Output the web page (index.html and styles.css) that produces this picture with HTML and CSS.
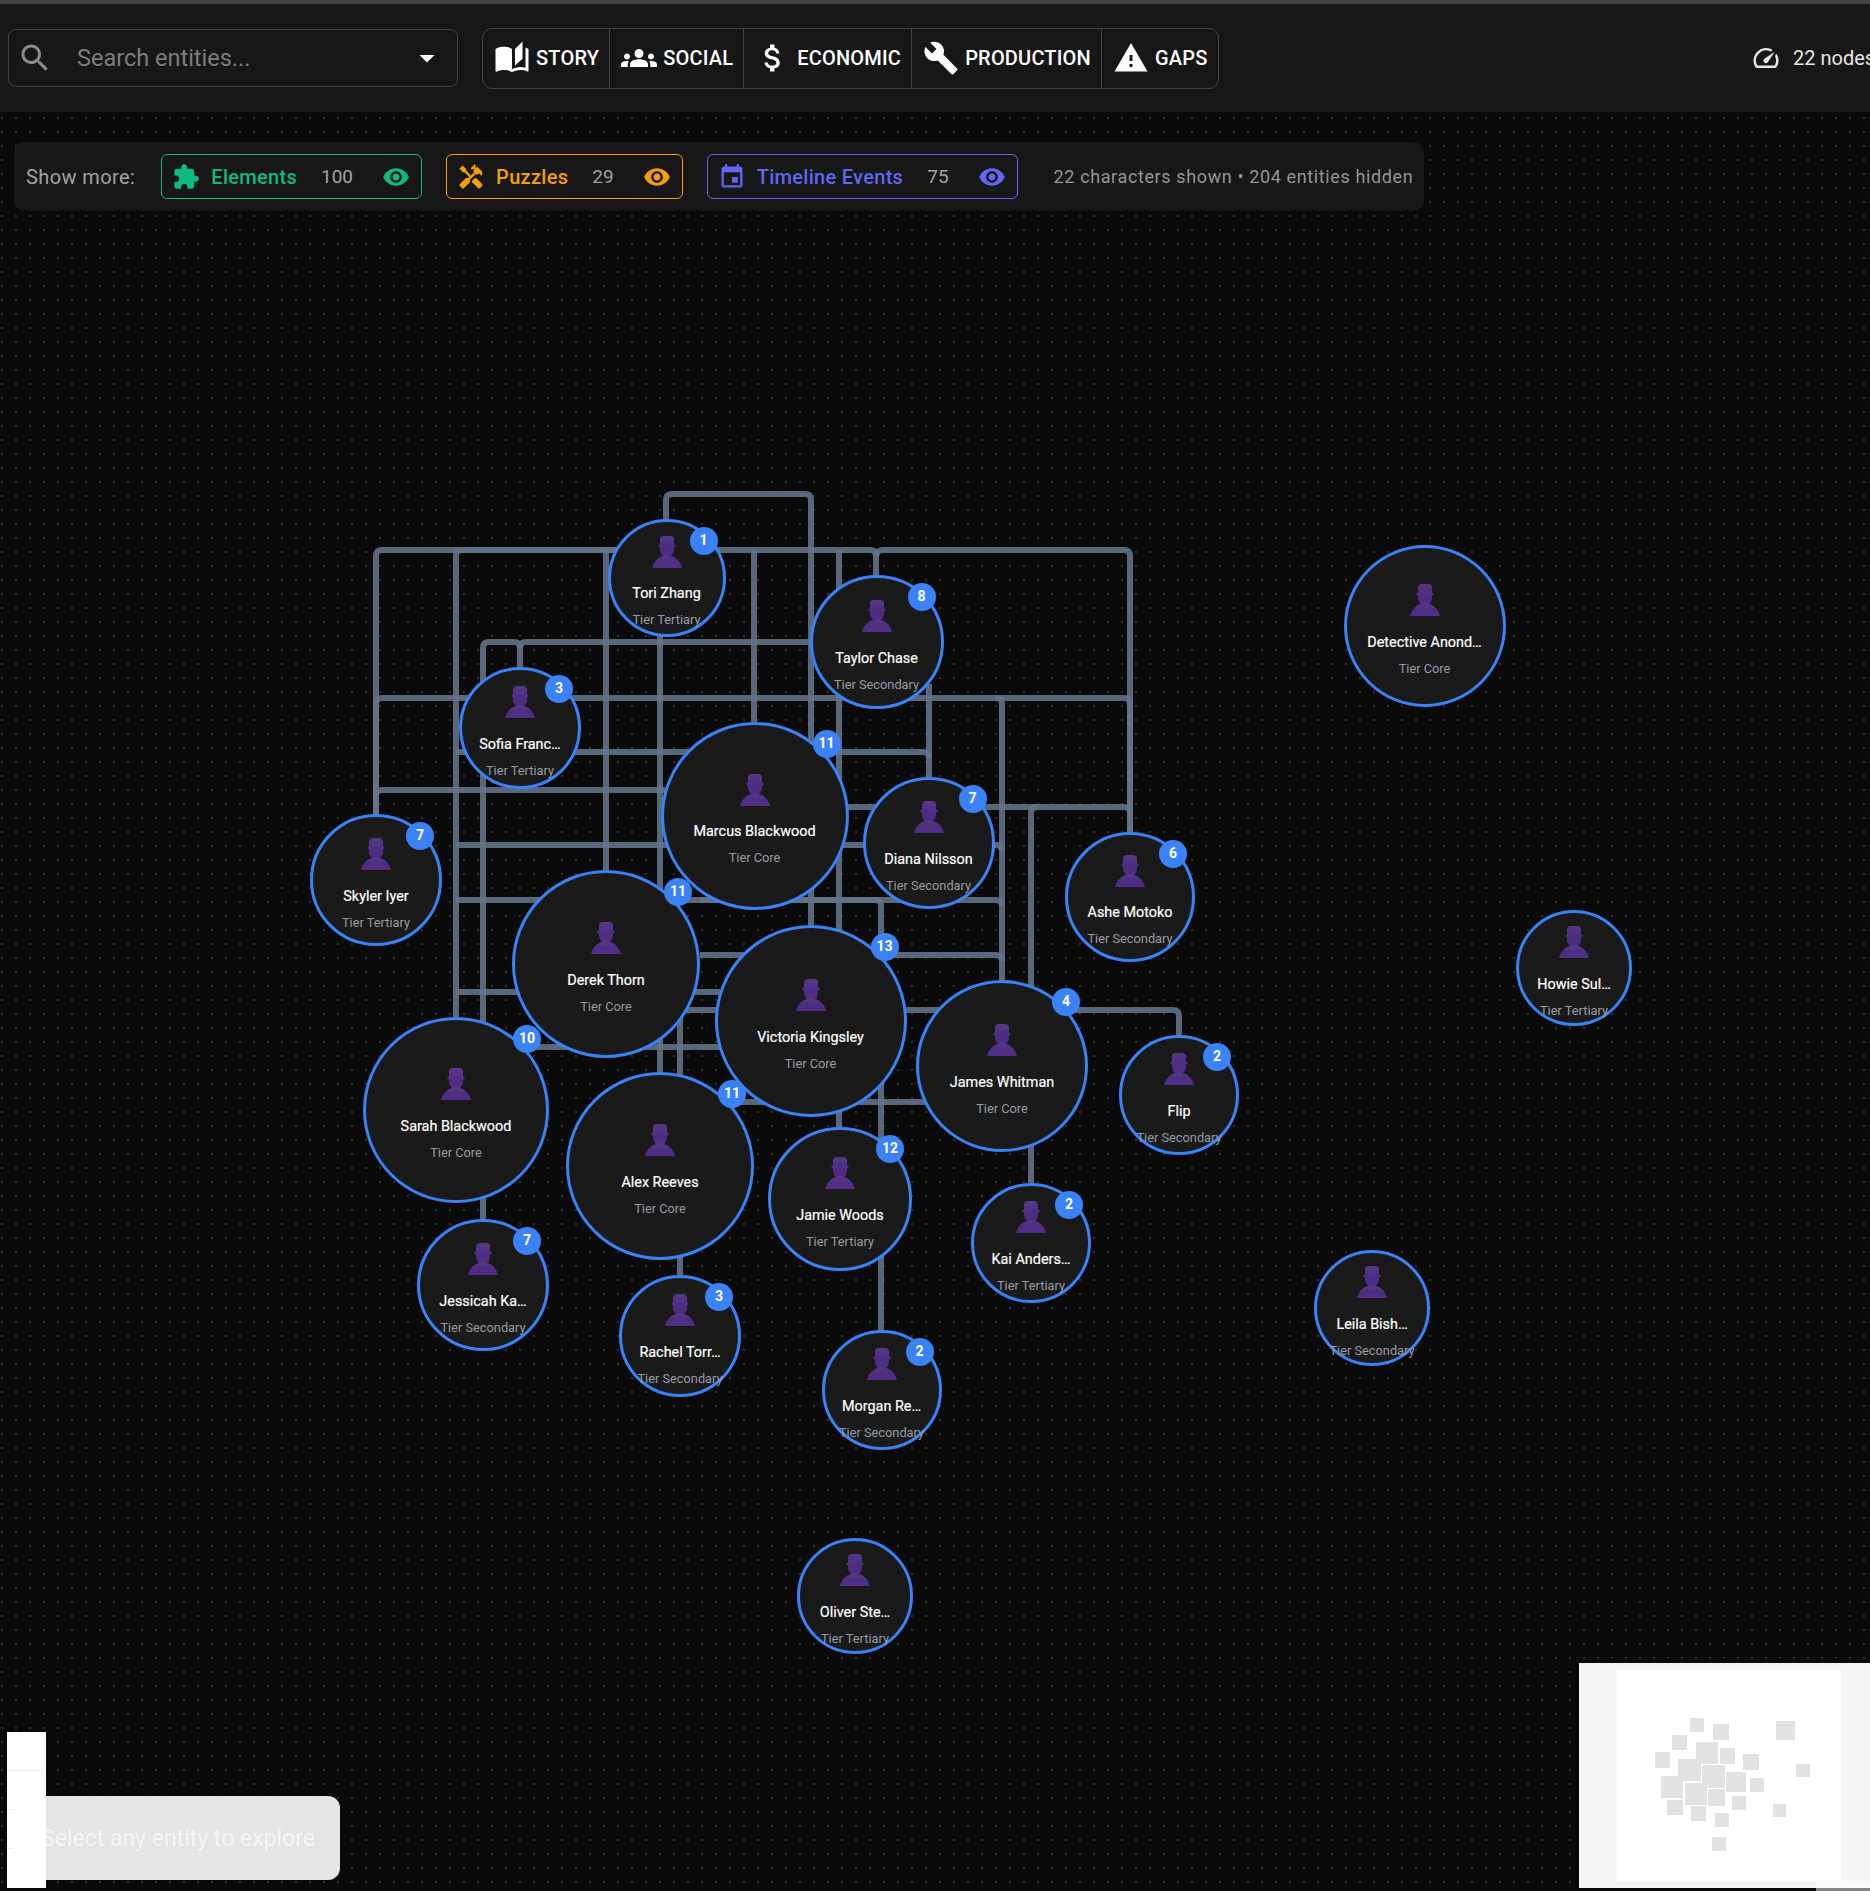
FILE: index.html
```html
<!DOCTYPE html>
<html>

<head>
	<title>entity graph</title>
	<link rel="stylesheet" href="styles.css">
</head>

<body>
	<svg class="sprite" aria-hidden="true">
		<defs>
			<linearGradient id="person-fill" x1="0" y1="0" x2="0" y2="1">
				<stop offset="0" stop-color="#573a85" />
				<stop offset="0.5" stop-color="#4e2d82" />
				<stop offset="1" stop-color="#512d8a" />
			</linearGradient>
		</defs>
		<symbol id="i-person" viewBox="0 0 30 32">
			<g fill="url(#person-fill)">
				<path d="M8 3.500Q8 0 12 0H18Q22 0 22 3.500V13Q22 20 15 21.500Q8 20 8 13Z" />
				<circle cx="7.800" cy="10" r="1.500" />
				<circle cx="22.200" cy="10" r="1.500" />
				<path d="M0 32C1.500 25 7 19.500 15 19.500S28.500 25 30 32Z" />
			</g>
		</symbol>
		<symbol id="i-eye" viewBox="0 0 24 24">
			<path d="M12 4.500C7 4.500 2.730 7.610 1 12c1.730 4.390 6 7.500 11 7.500s9.270-3.110 11-7.500c-1.730-4.390-6-7.500-11-7.500zM12 17c-2.760 0-5-2.240-5-5s2.240-5 5-5 5 2.240 5 5-2.240 5-5 5zm0-8c-1.660 0-3 1.340-3 3s1.340 3 3 3 3-1.340 3-3-1.340-3-3-3z" />
		</symbol>
	</svg>

	<div class="strip"></div>

	<header class="topbar">
		<div class="search">
			<svg class="search-icon" viewBox="0 0 24 24"><path d="M15.500 14h-.79l-.28-.27C15.410 12.590 16 11.110 16 9.500 16 5.910 13.090 3 9.500 3S3 5.910 3 9.500 5.910 16 9.500 16c1.610 0 3.090-.59 4.230-1.570l.27.28v.79l5 4.990L20.490 19l-4.990-5zm-6 0C7.010 14 5 11.990 5 9.500S7.010 5 9.500 5 14 7.010 14 9.500 11.990 14 9.500 14z" /></svg>
			<span class="search-text">Search entities...</span>
			<svg class="search-arrow" viewBox="0 0 24 24"><path d="M7 10l5 5 5-5z" /></svg>
		</div>

		<nav class="lenses">
			<div class="lens">
				<svg viewBox="0 0 24 24"><path d="M19 1l-5 5v11l5-4.500V1zM1 6v14.650c0 .25.25.5.5.5.1 0 .15-.05.25-.05C3.100 20.450 5.050 20 6.500 20c1.950 0 4.050.4 5.500 1.500V6c-1.450-1.100-3.550-1.500-5.500-1.500S2.450 4.900 1 6zm22 13.500V6c-.6-.45-1.250-.75-2-1v13.500c-1.100-.35-2.300-.5-3.500-.5-1.700 0-4.150.65-5.500 1.500v2c1.350-.85 3.800-1.500 5.500-1.500 1.650 0 3.350.3 4.750 1.050.1.05.15.05.25.05.25 0 .5-.25.5-.5v-1.100z" /></svg>
				STORY
			</div>
			<div class="lens">
				<svg viewBox="0 0 24 24"><path d="M12 12.750c1.630 0 3.070.39 4.240.9 1.080.48 1.760 1.560 1.760 2.730V18H6v-1.610c0-1.180.68-2.260 1.760-2.730 1.170-.52 2.610-.91 4.240-.91zM4 13c1.100 0 2-.9 2-2s-.9-2-2-2-2 .9-2 2 .9 2 2 2zm1.130 1.100c-.37-.06-.74-.1-1.130-.1-.99 0-1.930.21-2.780.58C.48 14.900 0 15.620 0 16.430V18h4.500v-1.610c0-.83.23-1.610.63-2.290zM20 13c1.100 0 2-.9 2-2s-.9-2-2-2-2 .9-2 2 .9 2 2 2zm4 3.430c0-.81-.48-1.530-1.220-1.850-.85-.37-1.790-.58-2.780-.58-.39 0-.76.04-1.130.1.4.68.63 1.460.63 2.290V18H24v-1.570zM12 6c1.660 0 3 1.340 3 3s-1.340 3-3 3-3-1.340-3-3 1.340-3 3-3z" /></svg>
				SOCIAL
			</div>
			<div class="lens">
				<svg viewBox="0 0 24 24"><path d="M11.800 10.900c-2.270-.59-3-1.200-3-2.150 0-1.090 1.010-1.850 2.700-1.850 1.780 0 2.440.85 2.500 2.100h2.210c-.07-1.720-1.120-3.300-3.210-3.810V3h-3v2.160c-1.940.42-3.500 1.680-3.500 3.610 0 2.310 1.910 3.460 4.700 4.130 2.500.6 3 1.480 3 2.410 0 .69-.49 1.790-2.700 1.790-2.060 0-2.870-.92-2.980-2.100h-2.200c.12 2.190 1.760 3.420 3.680 3.830V21h3v-2.150c1.950-.37 3.500-1.500 3.500-3.550 0-2.840-2.430-3.810-4.700-4.400z" /></svg>
				ECONOMIC
			</div>
			<div class="lens">
				<svg viewBox="0 0 24 24"><path d="M22.700 19l-9.100-9.100c.9-2.300.4-5-1.500-6.900-2-2-5-2.400-7.400-1.300L9 6 6 9 1.600 4.700C.4 7.100.9 10.100 2.900 12.100c1.900 1.900 4.600 2.400 6.900 1.500l9.100 9.100c.4.4 1 .4 1.400 0l2.300-2.300c.5-.4.5-1.100.1-1.400z" /></svg>
				PRODUCTION
			</div>
			<div class="lens">
				<svg viewBox="0 0 24 24"><path d="M1 21h22L12 2 1 21zm12-3h-2v-2h2v2zm0-4h-2v-4h2v4z" /></svg>
				GAPS
			</div>
		</nav>

		<div class="stat">
			<svg viewBox="0 0 24 24"><path d="M20.380 8.570l-1.230 1.850a8 8 0 0 1-.22 7.580H5.070A8 8 0 0 1 15.580 6.850l1.850-1.230A10 10 0 0 0 3.350 19a2 2 0 0 0 1.720 1h13.850a2 2 0 0 0 1.740-1 10 10 0 0 0-.27-10.440zm-9.790 6.840a2 2 0 0 0 2.830 0l5.660-8.490-8.490 5.660a2 2 0 0 0 0 2.830z" /></svg>
			22 nodes
		</div>
	</header>

	<main class="canvas">
		<svg class="edges" viewBox="0 112 1870 1779">
			<path d="M666 519V500Q666 494 672 494H805Q811 494 811 500V925" />
			<path d="M376 815V556Q376 550 382 550H870Q876 550 876 556V576" />
			<path d="M376 815V704Q376 698 382 698H1124Q1130 698 1130 704V832" />
			<path d="M376 815V796Q376 790 382 790H665" />
			<path d="M456 1018V556Q456 550 462 550H660" />
			<path d="M1130 832V556Q1130 550 1124 550H883Q877 550 876 556" />
			<path d="M520 667V648Q520 642 526 642H812" />
			<path d="M483 1219V648Q483 642 489 642H514Q520 642 520 648" />
			<path d="M606 870V550" />
			<path d="M660 1073V630" />
			<path d="M754 722V550" />
			<path d="M839 1127V550" />
			<path d="M929 777V684" />
			<path d="M456 752H923Q929 752 929 758" />
			<path d="M456 845H996Q1002 845 1002 851" />
			<path d="M845 807H1124Q1130 807 1130 813" />
			<path d="M1031 1183V813Q1031 807 1037 807" />
			<path d="M456 900H996Q1002 900 1002 906" />
			<path d="M700 900H875Q881 900 881 906V1330" />
			<path d="M700 955H996Q1002 955 1002 961" />
			<path d="M1002 980V704Q1002 698 996 698" />
			<path d="M456 992H720" />
			<path d="M680 1275V1016Q680 1010 686 1010H1173Q1179 1010 1179 1016V1035" />
			<path d="M530 1047H720" />
			<path d="M740 1102H925" />
		</svg>

		<div class="node" style="left:607.5px;top:406.5px;width:118px;height:118px">
			<span class="badge">1</span>
			<svg class="person"><use href="#i-person" /></svg>
			<div class="name">Tori Zhang</div>
			<div class="tier">Tier Tertiary</div>
		</div>
		<div class="node" style="left:809.5px;top:463px;width:134px;height:134px">
			<span class="badge">8</span>
			<svg class="person"><use href="#i-person" /></svg>
			<div class="name">Taylor Chase</div>
			<div class="tier">Tier Secondary</div>
		</div>
		<div class="node" style="left:459px;top:555px;width:122px;height:122px">
			<span class="badge">3</span>
			<svg class="person"><use href="#i-person" /></svg>
			<div class="name">Sofia Franc…</div>
			<div class="tier">Tier Tertiary</div>
		</div>
		<div class="node" style="left:660.5px;top:609.5px;width:188px;height:188px">
			<span class="badge">11</span>
			<svg class="person"><use href="#i-person" /></svg>
			<div class="name">Marcus Blackwood</div>
			<div class="tier">Tier Core</div>
		</div>
		<div class="node" style="left:862.5px;top:665px;width:132px;height:132px">
			<span class="badge">7</span>
			<svg class="person"><use href="#i-person" /></svg>
			<div class="name">Diana Nilsson</div>
			<div class="tier">Tier Secondary</div>
		</div>
		<div class="node" style="left:1065px;top:719.5px;width:130px;height:130px">
			<span class="badge">6</span>
			<svg class="person"><use href="#i-person" /></svg>
			<div class="name">Ashe Motoko</div>
			<div class="tier">Tier Secondary</div>
		</div>
		<div class="node" style="left:310px;top:702px;width:132px;height:132px">
			<span class="badge">7</span>
			<svg class="person"><use href="#i-person" /></svg>
			<div class="name">Skyler Iyer</div>
			<div class="tier">Tier Tertiary</div>
		</div>
		<div class="node" style="left:512px;top:758px;width:188px;height:188px">
			<span class="badge">11</span>
			<svg class="person"><use href="#i-person" /></svg>
			<div class="name">Derek Thorn</div>
			<div class="tier">Tier Core</div>
		</div>
		<div class="node" style="left:714.5px;top:813px;width:192px;height:192px">
			<span class="badge">13</span>
			<svg class="person"><use href="#i-person" /></svg>
			<div class="name">Victoria Kingsley</div>
			<div class="tier">Tier Core</div>
		</div>
		<div class="node" style="left:916px;top:868px;width:172px;height:172px">
			<span class="badge">4</span>
			<svg class="person"><use href="#i-person" /></svg>
			<div class="name">James Whitman</div>
			<div class="tier">Tier Core</div>
		</div>
		<div class="node" style="left:1119px;top:923px;width:120px;height:120px">
			<span class="badge">2</span>
			<svg class="person"><use href="#i-person" /></svg>
			<div class="name">Flip</div>
			<div class="tier">Tier Secondary</div>
		</div>
		<div class="node" style="left:363px;top:905px;width:186px;height:186px">
			<span class="badge">10</span>
			<svg class="person"><use href="#i-person" /></svg>
			<div class="name">Sarah Blackwood</div>
			<div class="tier">Tier Core</div>
		</div>
		<div class="node" style="left:566px;top:960px;width:188px;height:188px">
			<span class="badge">11</span>
			<svg class="person"><use href="#i-person" /></svg>
			<div class="name">Alex Reeves</div>
			<div class="tier">Tier Core</div>
		</div>
		<div class="node" style="left:768px;top:1015px;width:144px;height:144px">
			<span class="badge">12</span>
			<svg class="person"><use href="#i-person" /></svg>
			<div class="name">Jamie Woods</div>
			<div class="tier">Tier Tertiary</div>
		</div>
		<div class="node" style="left:971px;top:1071px;width:120px;height:120px">
			<span class="badge">2</span>
			<svg class="person"><use href="#i-person" /></svg>
			<div class="name">Kai Anders…</div>
			<div class="tier">Tier Tertiary</div>
		</div>
		<div class="node" style="left:417px;top:1107px;width:132px;height:132px">
			<span class="badge">7</span>
			<svg class="person"><use href="#i-person" /></svg>
			<div class="name">Jessicah Ka…</div>
			<div class="tier">Tier Secondary</div>
		</div>
		<div class="node" style="left:619px;top:1163px;width:122px;height:122px">
			<span class="badge">3</span>
			<svg class="person"><use href="#i-person" /></svg>
			<div class="name">Rachel Torr…</div>
			<div class="tier">Tier Secondary</div>
		</div>
		<div class="node" style="left:821.5px;top:1218px;width:120px;height:120px">
			<span class="badge">2</span>
			<svg class="person"><use href="#i-person" /></svg>
			<div class="name">Morgan Re…</div>
			<div class="tier">Tier Secondary</div>
		</div>
		<div class="node" style="left:1343.5px;top:433px;width:162px;height:162px">
			<svg class="person"><use href="#i-person" /></svg>
			<div class="name">Detective Anond…</div>
			<div class="tier">Tier Core</div>
		</div>
		<div class="node" style="left:1516px;top:798px;width:116px;height:116px">
			<svg class="person"><use href="#i-person" /></svg>
			<div class="name">Howie Sul…</div>
			<div class="tier">Tier Tertiary</div>
		</div>
		<div class="node" style="left:1314px;top:1138px;width:116px;height:116px">
			<svg class="person"><use href="#i-person" /></svg>
			<div class="name">Leila Bish…</div>
			<div class="tier">Tier Secondary</div>
		</div>
		<div class="node" style="left:797px;top:1426px;width:116px;height:116px">
			<svg class="person"><use href="#i-person" /></svg>
			<div class="name">Oliver Ste…</div>
			<div class="tier">Tier Tertiary</div>
		</div>

		<section class="more">
			<span class="more-label">Show more:</span>
			<div class="chip chip-elements">
				<svg class="chip-icon" viewBox="0 0 24 24"><path d="M20.500 11H19V7c0-1.100-.9-2-2-2h-4V3.500C13 2.120 11.880 1 10.500 1S8 2.120 8 3.500V5H4c-1.100 0-1.990.9-1.990 2v3.800H3.500c1.490 0 2.700 1.210 2.700 2.700s-1.210 2.700-2.700 2.700H2V20c0 1.100.9 2 2 2h3.800v-1.500c0-1.490 1.210-2.700 2.700-2.700 1.490 0 2.700 1.210 2.700 2.700V22H17c1.100 0 2-.9 2-2v-4h1.500c1.380 0 2.500-1.120 2.500-2.500S21.880 11 20.500 11z" /></svg>
				<span class="chip-label">Elements</span>
				<span class="chip-count">100</span>
				<svg class="chip-eye"><use href="#i-eye" /></svg>
			</div>
			<div class="chip chip-puzzles">
				<svg class="chip-icon" viewBox="0 0 24 24"><path d="M21.670 18.170l-5.300-5.300h-.99l-2.540 2.540v.99l5.300 5.300c.39.39 1.020.39 1.410 0l2.120-2.120c.39-.38.39-1.020 0-1.410zM17.340 10.190l1.410-1.410 2.120 2.120c1.170-1.170 1.170-3.070 0-4.240l-3.540-3.540-1.410 1.410V1.710l-.7-.71-3.540 3.540.71.71h2.830l-1.410 1.410 1.060 1.060-2.890 2.890-4.130-4.130V5.060L4.830 2.040 2 4.870 5.030 7.900h1.410l4.130 4.130-.85.85H7.600l-5.300 5.300c-.39.39-.39 1.020 0 1.410l2.120 2.120c.39.39 1.020.39 1.410 0l5.300-5.300v-2.120l5.150-5.150 1.060 1.050z" /></svg>
				<span class="chip-label">Puzzles</span>
				<span class="chip-count">29</span>
				<svg class="chip-eye"><use href="#i-eye" /></svg>
			</div>
			<div class="chip chip-timeline">
				<svg class="chip-icon" viewBox="0 0 24 24"><path d="M17 12h-5v5h5v-5zM16 1v2H8V1H6v2H5c-1.110 0-1.990.9-1.990 2L3 19c0 1.100.89 2 2 2h14c1.100 0 2-.9 2-2V5c0-1.100-.9-2-2-2h-1V1h-2zm3 18H5V8h14v11z" /></svg>
				<span class="chip-label">Timeline Events</span>
				<span class="chip-count">75</span>
				<svg class="chip-eye"><use href="#i-eye" /></svg>
			</div>
			<span class="more-summary">22 characters shown • 204 entities hidden</span>
		</section>

		<div class="hint">Select any entity to explore</div>

		<div class="controls">
			<div class="control control-full"></div>
			<div class="control"></div>
			<div class="control"></div>
			<div class="control control-last"></div>
		</div>

		<svg class="minimap" viewBox="57 69 873 675">
			<rect class="minimap-view" x="170" y="90" width="674" height="632" />
			<g class="minimap-nodes">
				<rect x="390" y="234" width="42" height="42" />
				<rect x="459" y="252" width="48" height="48" />
				<rect x="648" y="243" width="57" height="57" />
				<rect x="336" y="285" width="45" height="45" />
				<rect x="408" y="306" width="66" height="66" />
				<rect x="480" y="324" width="45" height="48" />
				<rect x="549" y="342" width="48" height="48" />
				<rect x="285" y="336" width="45" height="48" />
				<rect x="354" y="357" width="69" height="66" />
				<rect x="708" y="372" width="42" height="39" />
				<rect x="426" y="375" width="69" height="69" />
				<rect x="498" y="396" width="60" height="60" />
				<rect x="570" y="414" width="42" height="42" />
				<rect x="303" y="408" width="66" height="66" />
				<rect x="375" y="429" width="66" height="66" />
				<rect x="444" y="447" width="51" height="51" />
				<rect x="516" y="468" width="42" height="42" />
				<rect x="321" y="480" width="48" height="45" />
				<rect x="393" y="498" width="45" height="45" />
				<rect x="639" y="492" width="39" height="39" />
				<rect x="465" y="519" width="42" height="42" />
				<rect x="456" y="591" width="42" height="42" />
			</g>
		</svg>

		<div class="reset">Reset Filters</div>
	</main>
</body>

</html>
```
FILE: styles.css
```css
html,
body {
	margin: 0;
	height: 100%;
	overflow: hidden;
	background: #0a0a0a;
	font-family: Roboto, 'Liberation Sans', sans-serif;
	color: #fff;
}

.sprite {
	position: absolute;
	width: 0;
	height: 0;
}

.strip {
	height: 4px;
	background: #424242;
}

/* top bar */
.topbar {
	display: flex;
	align-items: center;
	height: 108px;
	box-sizing: border-box;
	padding-left: 8px;
	background: #171717;
	white-space: nowrap;
}

.search {
	display: flex;
	flex: 0 0 450px;
	align-items: center;
	box-sizing: border-box;
	height: 58px;
	padding: 0 12px 0 8px;
	border: 1px solid #454545;
	border-radius: 8px;
}

.search-icon {
	width: 36px;
	height: 36px;
	fill: #8c8c8c;
}

.search-text {
	flex: 1;
	margin-left: 24px;
	font-size: 23.5px;
	color: #7e7e7e;
}

.search-arrow {
	width: 36px;
	height: 36px;
	fill: #fff;
}

.lenses {
	display: flex;
	height: 59px;
	margin-left: 24px;
	border: 1px solid #454545;
	border-radius: 10px;
}

.lens {
	display: flex;
	align-items: center;
	gap: 6px;
	padding: 0 10px 0 11px;
	border-left: 1px solid #454545;
	font-size: 20px;
	font-weight: 500;
	letter-spacing: 0.2px;
}

.lens:first-child {
	border-left: 0;
}

.lens svg {
	width: 36px;
	height: 36px;
	fill: #fff;
}

.stat {
	display: flex;
	align-items: center;
	gap: 12px;
	margin-left: 532.5px;
	font-size: 20px;
	color: #e6e6e6;
}

.stat svg {
	width: 30px;
	height: 30px;
	fill: #e6e6e6;
}

/* graph canvas */
.canvas {
	position: relative;
	height: 1779px;
	background-image: radial-gradient(circle, #3f3f3f 0.65px, transparent 0.85px);
	background-size: 14px 14px;
	background-position: -5px -1px;
}

.edges {
	position: absolute;
	left: 0;
	top: 0;
	width: 1870px;
	height: 1779px;
	fill: none;
	stroke: #64748b;
	stroke-width: 6;
	stroke-opacity: 0.88;
}

.node {
	position: absolute;
	display: flex;
	flex-direction: column;
	align-items: center;
	justify-content: center;
	box-sizing: border-box;
	padding-top: 10px;
	border: 3px solid #3b82f6;
	border-radius: 50%;
	background: #1a1a1a;
	white-space: nowrap;
}

.person {
	width: 30px;
	height: 32px;
	flex: none;
}

.name {
	margin-top: 17.5px;
	font-size: 14.4px;
	line-height: 18px;
	-webkit-text-stroke: 0.2px #fff;
}

.tier {
	margin-top: 8px;
	font-size: 12.8px;
	line-height: 18px;
	color: #979ca5;
}

.badge {
	position: absolute;
	top: 5px;
	right: 5px;
	width: 28px;
	height: 28px;
	border-radius: 50%;
	background: #3b82f6;
	font-size: 14px;
	font-weight: 700;
	line-height: 27px;
	text-align: center;
}

/* show more panel */
.more {
	position: absolute;
	left: 14px;
	top: 30px;
	display: flex;
	align-items: center;
	box-sizing: border-box;
	width: 1410px;
	height: 69px;
	padding-left: 12px;
	border-radius: 10px;
	background: #171717;
	white-space: nowrap;
}

.more-label {
	margin-right: 26px;
	font-size: 20px;
	letter-spacing: 0.4px;
	color: #a3a3a3;
}

.chip {
	display: flex;
	align-items: center;
	box-sizing: border-box;
	height: 45px;
	margin-right: 24px;
	padding: 0 11px 0 10px;
	border: 1px solid currentColor;
	border-radius: 6px;
	font-size: 20px;
	font-weight: 500;
}

.chip-elements {
	color: #10b981;
}

.chip-puzzles {
	color: #f59e0b;
}

.chip-timeline {
	color: #6366f1;
}

.chip-icon {
	width: 28px;
	height: 28px;
	fill: currentColor;
}

.chip-label {
	margin-left: 11px;
	letter-spacing: 0.3px;
}

.chip-count {
	margin: 0 29px 0 24px;
	font-size: 19px;
	font-weight: 400;
	color: #a3a3a3;
}

.chip-eye {
	width: 28px;
	height: 28px;
	fill: currentColor;
}

.more-summary {
	margin-left: 12px;
	font-size: 18px;
	letter-spacing: 0.62px;
	color: #969696;
}

/* bottom overlays */
.hint {
	position: absolute;
	left: 16px;
	top: 1684px;
	display: flex;
	align-items: center;
	box-sizing: border-box;
	width: 324px;
	height: 84px;
	padding-left: 25px;
	border-radius: 12px;
	background: rgba(255, 255, 255, 0.89);
	font-size: 23px;
	color: #f5f5f5;
	white-space: nowrap;
}

.controls {
	position: absolute;
	left: 7px;
	top: 1620px;
	width: 39px;
	height: 156px;
	background: #fff;
}

.control {
	position: relative;
	height: 39px;
}

.control::after {
	content: '';
	position: absolute;
	left: 0;
	bottom: 0;
	width: 7px;
	height: 1px;
	background: #eee;
}

.control-full::after {
	width: 100%;
}

.control-last::after {
	display: none;
}

.minimap {
	position: absolute;
	left: 1579px;
	top: 1551px;
	width: 291px;
	height: 225px;
	background: #f5f5f5;
}

.minimap-view {
	fill: #fff;
}

.minimap-nodes {
	fill: #e2e2e2;
}

.reset {
	position: absolute;
	left: 1816px;
	top: 1769px;
	width: 120px;
	height: 44px;
	padding: 5px 0 0 5px;
	background: rgba(255, 255, 255, 0.5);
	font-size: 24px;
	color: #f5f5f5;
	white-space: nowrap;
}
```
